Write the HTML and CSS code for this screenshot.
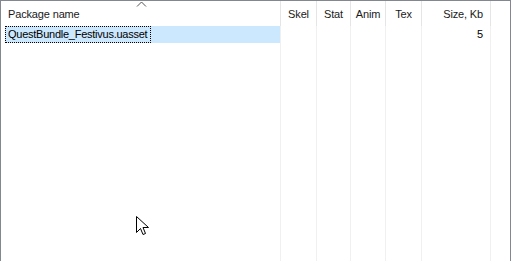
FILE: index.html
```html
<!DOCTYPE html>
<html>
<head>
	<title>Packages</title>
	<link rel="stylesheet" href="styles.css">
</head>
<body>
	<div class="list">
		<div class="col c-name">
			<div class="hd">
				<svg class="sort" width="11" height="6" viewBox="0 0 11 6"><path d="M1 5.5 L5.5 1 L10 5.5" fill="none" stroke="#555" stroke-width="1"/></svg>
				<span class="left">Package name</span>
			</div>
			<div class="bd">
				<div class="row sel"><span class="focus">QuestBundle_Festivus.uasset</span></div>
			</div>
		</div>
		<div class="col c-skel">
			<div class="hd center">Skel</div>
			<div class="bd"><div class="row"></div></div>
		</div>
		<div class="col c-stat">
			<div class="hd center">Stat</div>
			<div class="bd"><div class="row"></div></div>
		</div>
		<div class="col c-anim">
			<div class="hd center">Anim</div>
			<div class="bd"><div class="row"></div></div>
		</div>
		<div class="col c-tex">
			<div class="hd center">Tex</div>
			<div class="bd"><div class="row"></div></div>
		</div>
		<div class="col c-size">
			<div class="hd right">Size, Kb</div>
			<div class="bd"><div class="row right">5</div></div>
		</div>
		<div class="col c-rest">
			<div class="hd nb"></div>
			<div class="bd nb"></div>
		</div>

		<svg class="cursor" width="14" height="21" viewBox="0 0 14 21">
			<path d="M0.5 0.5 L0.5 16.5 L4.5 12.5 L7 18.5 L9.5 17.5 L7 11.5 L12.5 11.5 Z" fill="#fff" stroke="#000" stroke-width="1"/>
		</svg>
	</div>
</body>
</html>
```

FILE: styles.css
```css
body{
	margin: 0;
	background: #fff;
	font: 11px "Liberation Sans", Arial, sans-serif;
	color: #000;
}
.list{
	position: relative;
	display: flex;
	width: 509px;
	height: 260px;
	border-top: 1px solid #828790;
	border-left: 1px solid #828790;
	border-right: 1px solid #828790;
	overflow: hidden;
}
.col{
	display: flex;
	flex-direction: column;
}
.c-name{ width: 280px; }
.c-skel{ width: 36px; }
.c-stat{ width: 34px; }
.c-anim{ width: 35px; }
.c-tex{ width: 36px; }
.c-size{ width: 69px; }
.c-rest{ flex: 1; }

.hd{
	position: relative;
	height: 24px;
	line-height: 25px;
	padding-top: 1px;
	border-right: 1px solid #e5e5e5;
	color: #1a1a1a;
	white-space: nowrap;
	letter-spacing: -0.15px;
}
.hd .left{ padding-left: 7px; }
.center{ text-align: center; }
.right{ text-align: right; padding-right: 7px; }
.sort{
	position: absolute;
	left: 135px;
	top: 0;
}
.bd{
	flex: 1;
	border-right: 1px solid #f0f0f0;
}
.nb{ border-right: none; }
.row{
	height: 17px;
	line-height: 17px;
	white-space: nowrap;
}
.sel{
	margin-left: 4px;
	background: #cce8ff;
}
.focus{
	display: inline-block;
	height: 15px;
	line-height: 15px;
	padding: 0 3px 0 2px;
	border: 1px dotted #000;
	letter-spacing: -0.25px;
}
.cursor{
	position: absolute;
	left: 135px;
	top: 215px;
}
```
